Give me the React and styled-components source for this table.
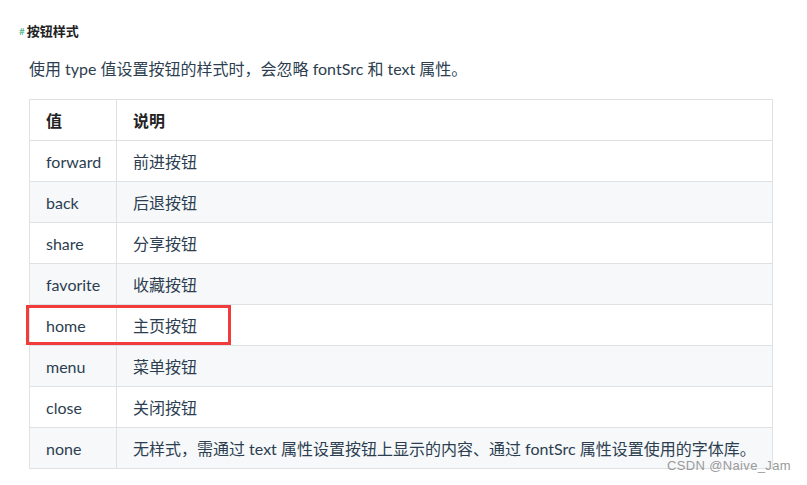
import React from 'react'
import styled, { createGlobalStyle } from 'styled-components'

const GlobalStyle = createGlobalStyle`
  html, body {
    margin: 0;
    padding: 0;
    background: #fff;
  }
  body {
    font-family: Lato, "Noto Sans CJK SC", sans-serif;
    color: #2c3e50;
  }
`

const Page = styled.div`
  position: relative;
  width: 807px;
  height: 485px;
  overflow: hidden;
  padding: 22px 0 0 19px;
  box-sizing: border-box;
`

const Heading = styled.h3`
  margin: 0;
  display: flex;
  align-items: center;
  font-size: 13px;
  font-weight: 700;
  line-height: 18px;
  color: #222;
`

const Anchor = styled.span`
  font-size: 10px;
  font-weight: 400;
  color: #3eaf7c;
  margin-right: 2px;
`

const Intro = styled.p`
  margin: 19px 0 0 10px;
  font-size: 16px;
  line-height: 20px;
  color: #2c3e50;
`

const TableWrap = styled.div`
  position: relative;
  margin: 20px 0 0 10px;
  width: 744px;
`

const Table = styled.table`
  width: 100%;
  table-layout: fixed;
  border-collapse: collapse;
  font-size: 16px;
  color: #2c3e50;
`

const Row = styled.tr`
  height: 41px;
  background: ${p => (p.$shade ? '#f6f8fa' : '#fff')};
`

const Th = styled.th`
  border: 1px solid #dfe2e5;
  padding: 0 16px;
  text-align: left;
  font-weight: 700;
  color: #222;
  width: ${p => p.$w || 'auto'};
  box-sizing: border-box;
`

const Td = styled.td`
  border: 1px solid #dfe2e5;
  padding: 0 16px;
  text-align: left;
  white-space: nowrap;
`

const Highlight = styled.div`
  position: absolute;
  left: -3px;
  top: 206px;
  width: 199px;
  height: 34px;
  border: 3px solid #f23b3b;
  pointer-events: none;
`

const Watermark = styled.div`
  position: absolute;
  left: 667px;
  top: 458px;
  font-family: "Liberation Sans", sans-serif;
  font-size: 13px;
  color: #9a9a9a;
  letter-spacing: 0.35px;
`

const rows = [
  ['forward', '前进按钮'],
  ['back', '后退按钮'],
  ['share', '分享按钮'],
  ['favorite', '收藏按钮'],
  ['home', '主页按钮'],
  ['menu', '菜单按钮'],
  ['close', '关闭按钮'],
  ['none', '无样式，需通过 text 属性设置按钮上显示的内容、通过 fontSrc 属性设置使用的字体库。'],
]

const App = () => {
  return (
    <Page>
      <GlobalStyle />
      <Heading>
        <Anchor>#</Anchor>按钮样式
      </Heading>
      <Intro>使用 type 值设置按钮的样式时，会忽略 fontSrc 和 text 属性。</Intro>
      <TableWrap>
        <Table>
          <thead>
            <Row>
              <Th $w="87px">值</Th>
              <Th>说明</Th>
            </Row>
          </thead>
          <tbody>
            {rows.map(([v, d], i) => (
              <Row key={v} $shade={i % 2 === 1}>
                <Td>{v}</Td>
                <Td>{d}</Td>
              </Row>
            ))}
          </tbody>
        </Table>
        <Highlight />
      </TableWrap>
      <Watermark>CSDN @Naive_Jam</Watermark>
    </Page>
  )
}

export default App
